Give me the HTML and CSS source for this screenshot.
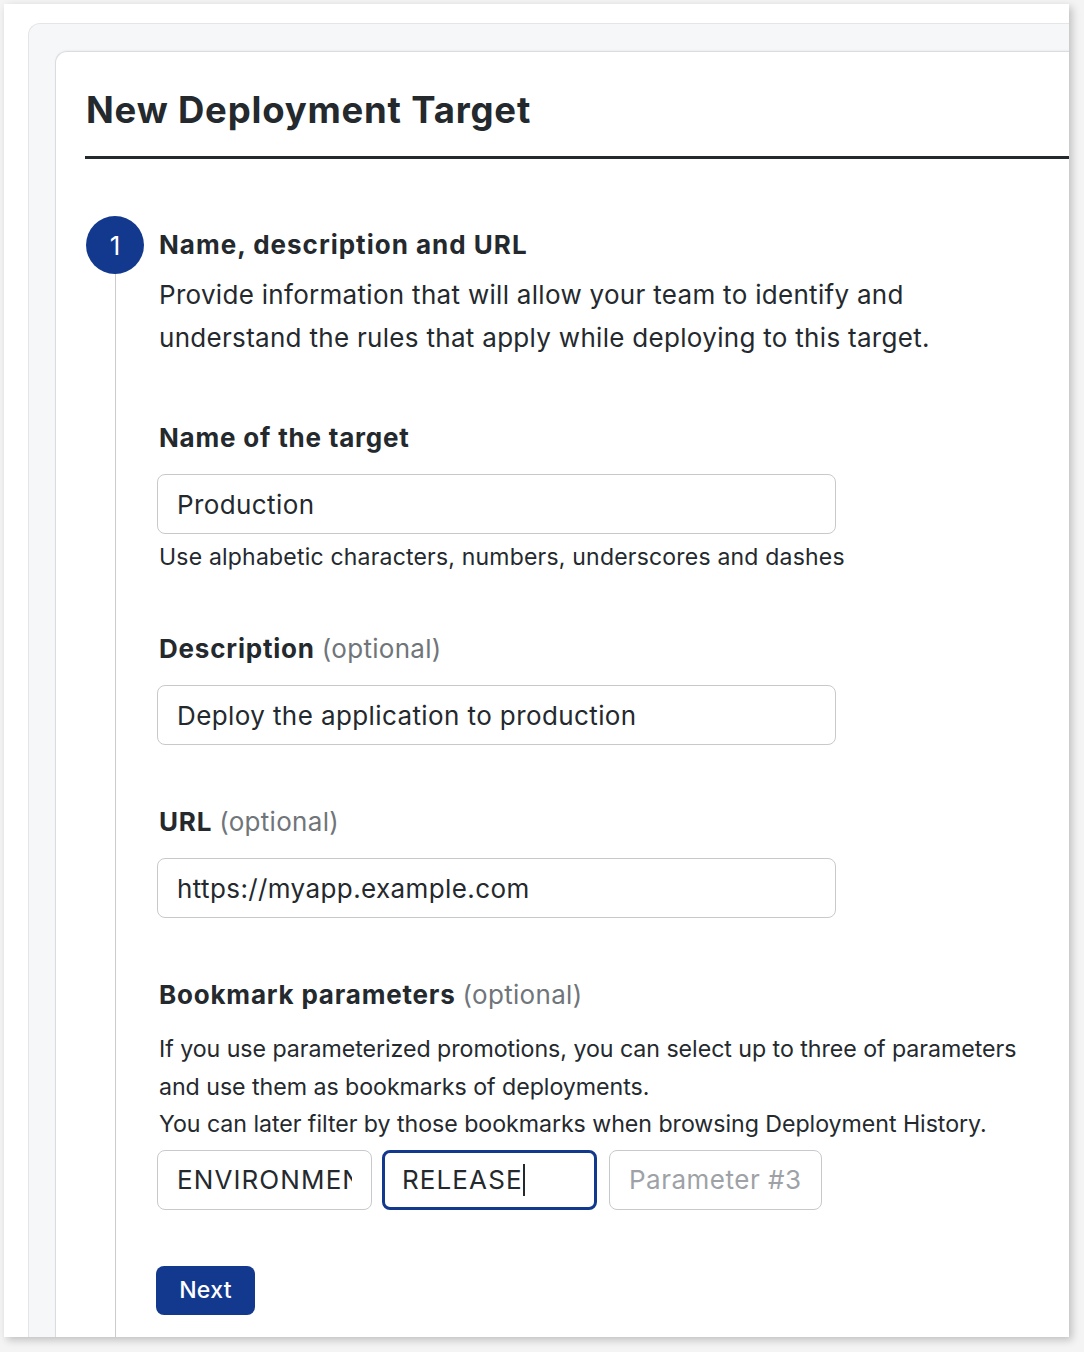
FILE: index.html
```html
<!DOCTYPE html>
<html lang="en">
<head>
<meta charset="utf-8">
<title>New Deployment Target</title>
<link rel="stylesheet" href="styles.css">
</head>
<body>
<div class="window">
  <div class="panel">
    <div class="card">
      <header class="card-header">
        <h1 class="title">New Deployment Target</h1>
      </header>
      <section class="step">
        <div class="step-rail">
          <div class="step-num">1</div>
          <div class="step-line"></div>
        </div>
        <div class="step-body">
          <h2 class="step-title">Name, description and URL</h2>
          <p class="step-desc">Provide information that will allow your team to identify and understand the rules that apply while deploying to this target.</p>

          <div class="group">
            <label class="label">Name of the target</label>
            <div class="field field-wide"><span class="value">Production</span></div>
            <p class="hint">Use alphabetic characters, numbers, underscores and dashes</p>
          </div>

          <div class="group">
            <label class="label">Description <span class="optional">(optional)</span></label>
            <div class="field field-wide"><span class="value">Deploy the application to production</span></div>
          </div>

          <div class="group">
            <label class="label">URL <span class="optional">(optional)</span></label>
            <div class="field field-wide"><span class="value">https://myapp.example.com</span></div>
          </div>

          <div class="group">
            <label class="label">Bookmark parameters <span class="optional">(optional)</span></label>
            <p class="info">If you use parameterized promotions, you can select up to three of parameters and use them as bookmarks of deployments.<br>You can later filter by those bookmarks when browsing Deployment History.</p>
            <div class="params">
              <div class="field field-param"><span class="value">ENVIRONMENT</span></div>
              <div class="field field-param is-focused"><span class="value">RELEASE<span class="caret"></span></span></div>
              <div class="field field-param is-placeholder"><span class="value">Parameter #3</span></div>
            </div>
          </div>

          <button class="btn-next" type="button">Next</button>
        </div>
      </section>
    </div>
  </div>
</div>
</body>
</html>
```

FILE: styles.css
```css
* { box-sizing: border-box; }

html, body {
  margin: 0;
  padding: 0;
}

body {
  background: #f4f4f4;
  font-family: Inter, "Noto Sans", "Liberation Sans", sans-serif;
  color: #24292e;
  width: 1084px;
  height: 1352px;
  overflow: hidden;
}

.window {
  margin: 4px 15px 0 4px;
  height: 1333px;
  background: #fff;
  box-shadow: 3px 3px 8px rgba(0, 0, 0, 0.22);
  overflow: hidden;
  padding: 19px 0 0 24px;
  display: flex;
}

.panel {
  flex: 1;
  display: flex;
  background: #f6f7f8;
  border: 1px solid #e4e5e7;
  border-right: none;
  border-bottom: none;
  border-radius: 12px 0 0 0;
  padding: 27px 0 0 26px;
  margin-right: -40px;
}

.card {
  flex: 1;
  display: flex;
  flex-direction: column;
  background: #fff;
  border: 1px solid #dadcdf;
  border-right: none;
  border-bottom: none;
  border-radius: 12px 0 0 0;
  padding: 0 0 0 29px;
  box-shadow: 0 -1px 2px rgba(0, 0, 0, 0.04);
}

.card-header {
  border-bottom: 3px solid #24292e;
  padding: 37px 0 24px 0;
  margin-right: 25px;
}

.title {
  margin: 0;
  font-size: 36.5px;
  line-height: 43px;
  font-weight: 700;
  letter-spacing: 0.8px;
  padding-left: 1px;
}

.step {
  flex: 1;
  display: flex;
  gap: 15px;
  margin-top: 57px;
}

.step-rail {
  width: 58px;
  margin-left: 1px;
  display: flex;
  flex-direction: column;
  align-items: center;
}

.step-num {
  width: 58px;
  height: 58px;
  border-radius: 50%;
  background: #13398f;
  color: #fff;
  font-size: 26px;
  display: flex;
  align-items: center;
  justify-content: center;
}

.step-line {
  flex: 1;
  width: 1px;
  background: #c9cbce;
}

.step-body {
  padding-top: 12px;
}

.step-title {
  margin: 0;
  font-size: 26px;
  line-height: 34px;
  font-weight: 700;
  letter-spacing: 1px;
}

.step-desc {
  margin: 11px 0 0 0;
  font-size: 26px;
  line-height: 43px;
  letter-spacing: 0.3px;
  width: 800px;
}

.group { margin-top: 62px; }
.group + .group { margin-top: 60px; }

.label {
  display: block;
  font-size: 26px;
  line-height: 34px;
  font-weight: 700;
  letter-spacing: 0.8px;
}

.optional {
  font-weight: 400;
  color: #70757a;
  letter-spacing: 0.3px;
}

.field {
  margin-top: 19px;
  margin-left: -2px;
  height: 60px;
  border: 1px solid #c7c9cc;
  border-radius: 8px;
  padding: 0 19px;
  font-size: 26px;
  letter-spacing: 0.4px;
  display: flex;
  align-items: center;
  background: #fff;
}

.value {
  flex: 1;
  min-width: 0;
  display: flex;
  align-items: center;
  white-space: nowrap;
  overflow: hidden;
}

.field-wide { width: 679px; }

.hint {
  margin: 8px 0 0 0;
  font-size: 23px;
  line-height: 30px;
  letter-spacing: 0.2px;
}

.info {
  margin: 19px 0 0 0;
  font-size: 23.2px;
  line-height: 37.5px;
  letter-spacing: -0.05px;
  width: 880px;
}

.params {
  display: flex;
  margin-top: 6px;
  margin-left: -2px;
}

.params .field {
  margin: 0;
  width: 215px;
  letter-spacing: 1.1px;
}

.params .field + .field { margin-left: 10px; }
.params .field:last-child { margin-left: 12px; width: 213px; letter-spacing: 0.5px; }

.is-focused {
  border: 3px solid #13398f;
  padding: 0 17px;
}

.caret {
  display: inline-block;
  width: 2px;
  height: 32px;
  background: #24292e;
  margin-left: 0;
}

.is-placeholder { color: #9ea2a6; }

.btn-next {
  margin-top: 56px;
  margin-left: -3px;
  width: 99px;
  height: 49px;
  border: none;
  border-radius: 8px;
  background: #13398f;
  color: #fff;
  font-family: inherit;
  font-size: 23px;
  font-weight: 500;
  letter-spacing: 0.3px;
  cursor: pointer;
  display: block;
}
```
